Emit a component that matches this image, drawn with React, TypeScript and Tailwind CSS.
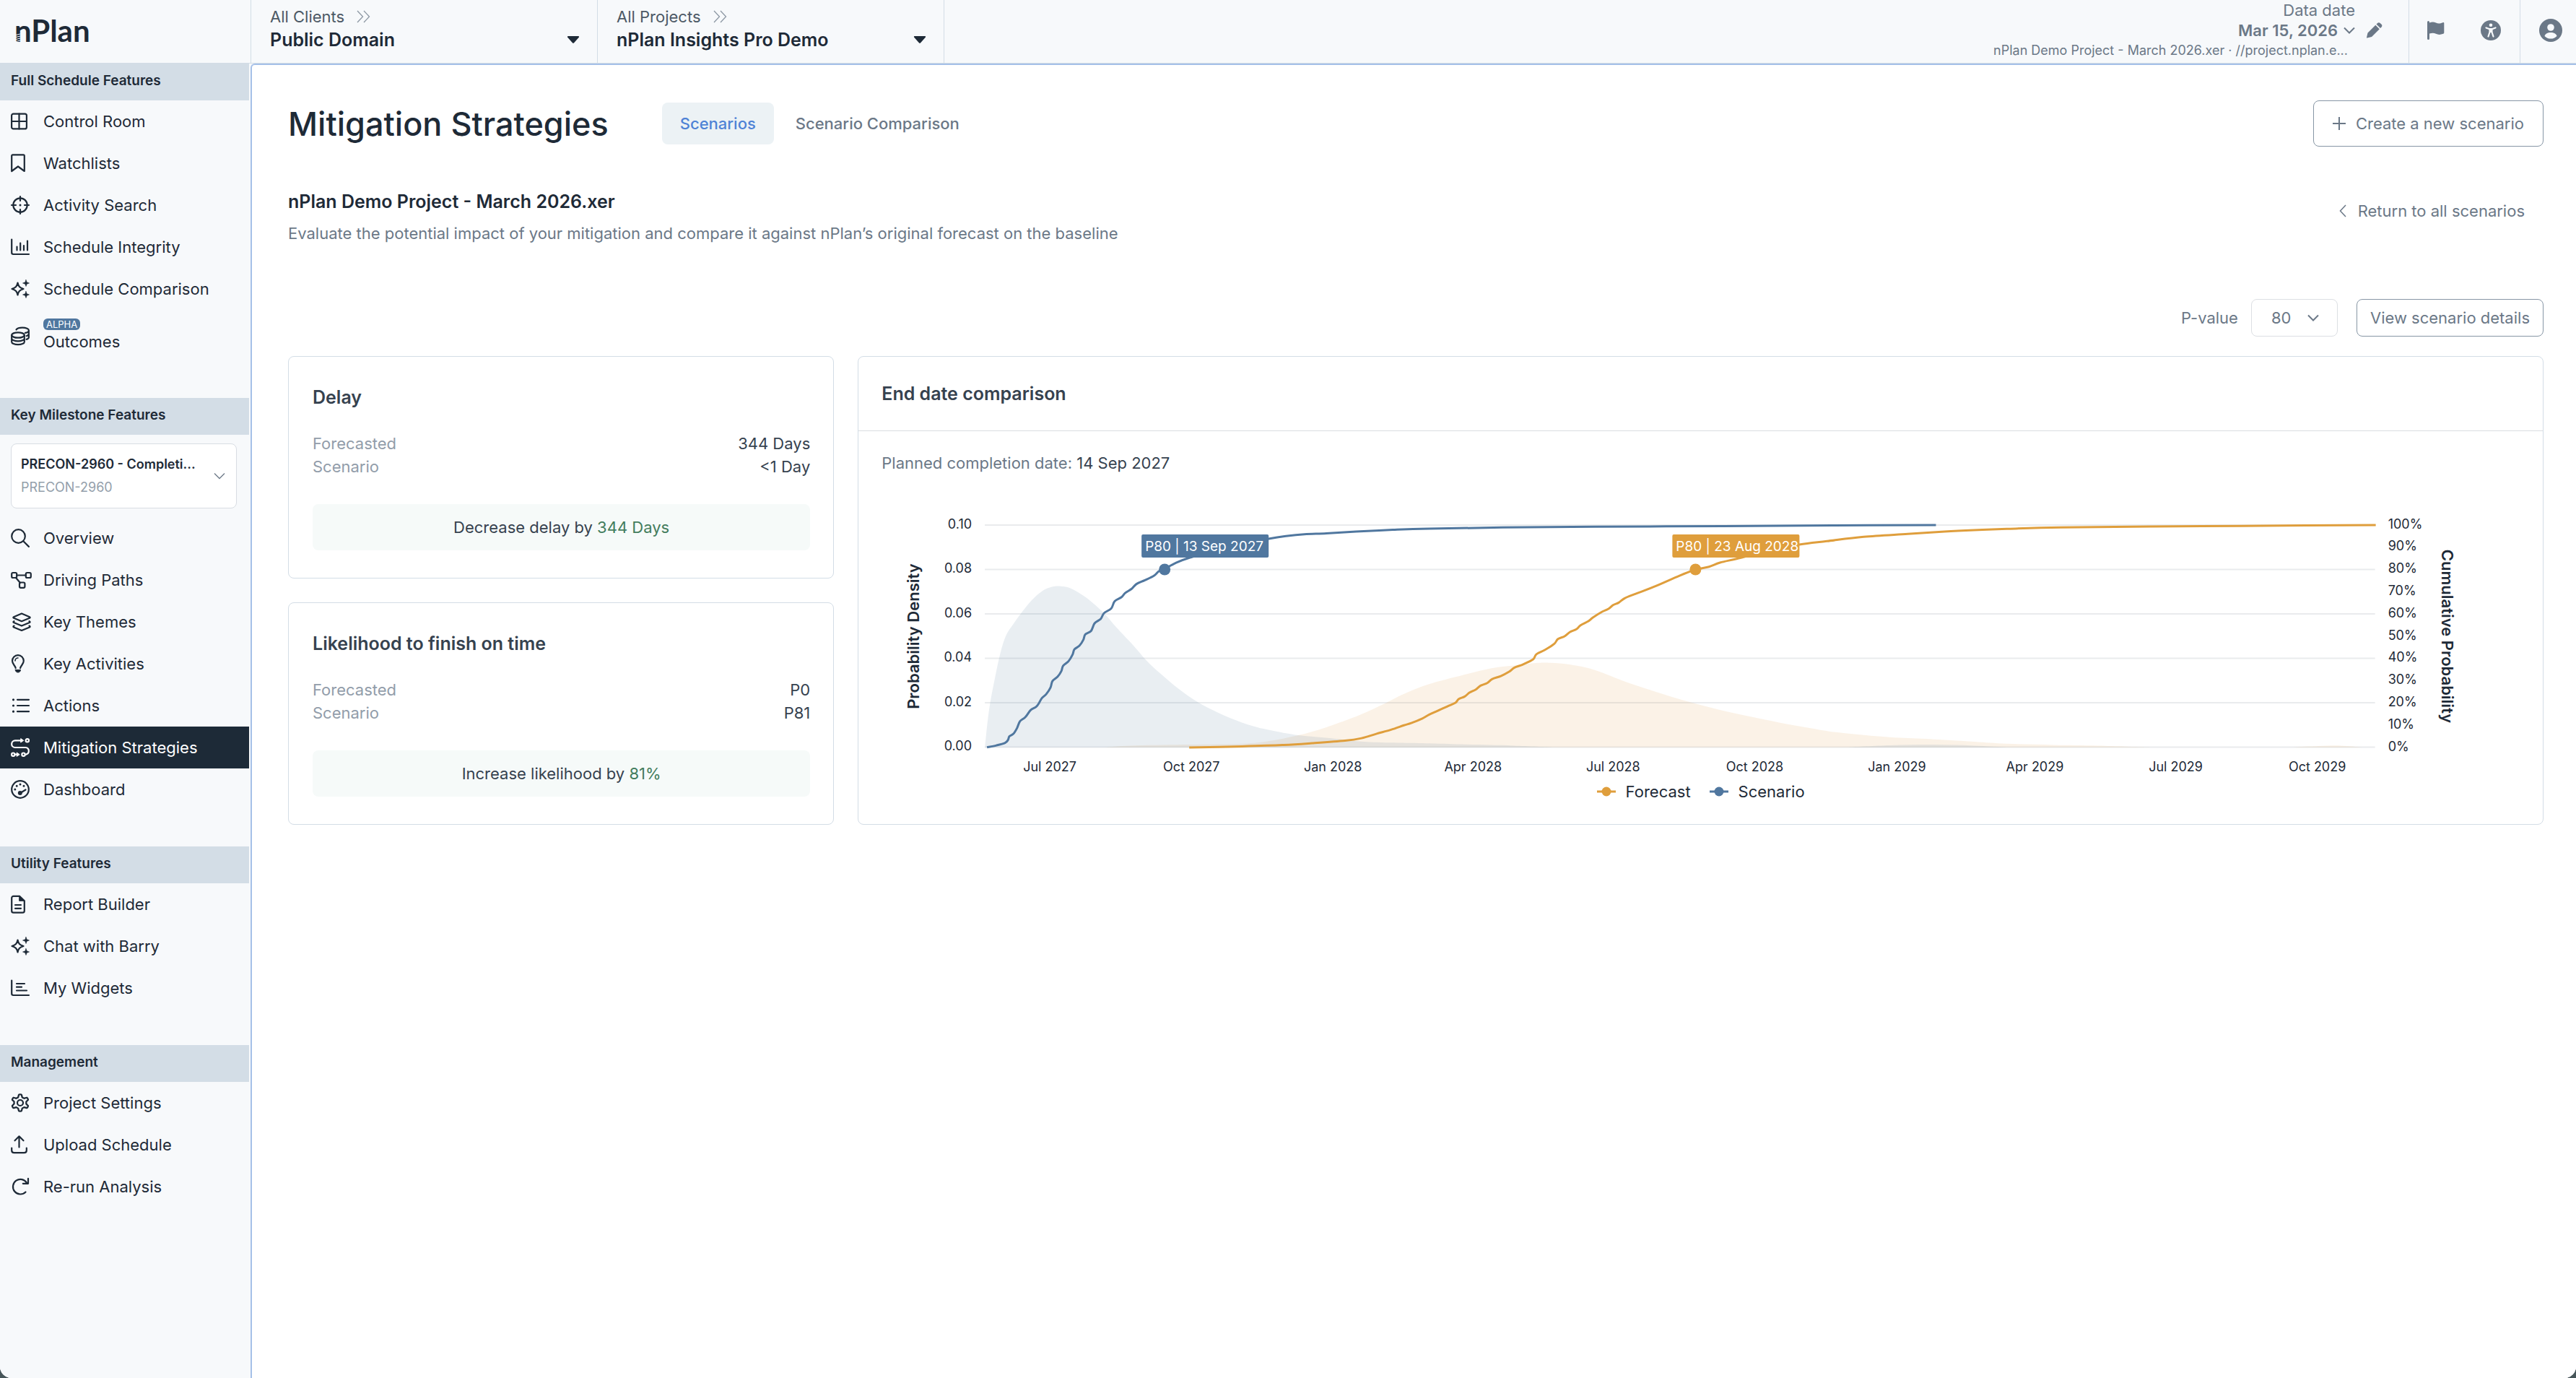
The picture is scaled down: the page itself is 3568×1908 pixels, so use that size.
import type { ReactNode } from 'react'

type IconName =
  | 'grid' | 'bookmark' | 'crosshair' | 'bars' | 'sparkles' | 'coins' | 'search' | 'flow' | 'layers'
  | 'bulb' | 'list' | 'route' | 'gauge' | 'file' | 'widgets' | 'gear' | 'upload' | 'refresh'

const sparkles = (
  <>
    <path d="M9.5 5.5c1 5 2.600 7 8 8.500c-5.400 1.500-7 3.500-8 8.500c-1-5-2.600-7-8-8.500c5.400-1.500 7-3.500 8-8.500z" />
    <path d="M21 1.500l1.200 3.300 3.300 1.200-3.300 1.200L21 10.500l-1.200-3.300L16.500 6l3.300-1.200z" fill="currentColor" strokeWidth="0.6" />
    <path d="M21 17.500l1.200 3.300 3.300 1.200-3.300 1.200L21 26.500l-1.200-3.300-3.300-1.200 3.300-1.200z" fill="currentColor" strokeWidth="0.6" />
  </>
)

const iconShapes: Record<IconName, ReactNode> = {
  grid: (
    <>
      <rect x="1.100" y="3.600" width="20.800" height="20.800" rx="2.500" />
      <path d="M11.500 3.600v20.800M1.100 14h20.800" />
    </>
  ),
  bookmark: <path d="M1.200 25V3.700c0-.8.600-1.400 1.400-1.400h14.800c.8 0 1.400.6 1.400 1.400V25L10 18.500z" />,
  crosshair: (
    <>
      <circle cx="13" cy="14" r="9.700" />
      <path d="M13 2v6M13 20v6M1 14h6M19 14h6" />
      <circle cx="13" cy="14" r="1.500" fill="currentColor" stroke="none" />
    </>
  ),
  bars: (
    <>
      <path d="M1.200 3.500v18.300c0 1.200 1 2.200 2.200 2.200H25" />
      <path d="M8.500 13.500v5M13.200 8.500v10M18 12v6.500M23 5.500v13" />
    </>
  ),
  sparkles,
  coins: (
    <>
      <ellipse cx="10" cy="13" rx="8.800" ry="3.700" />
      <path d="M1.200 13v9.500c0 2 3.900 3.700 8.800 3.700s8.800-1.700 8.800-3.700V13M1.200 17.700c0 2 3.900 3.700 8.800 3.700s8.800-1.700 8.800-3.700" />
      <path d="M7.500 5.500C8.800 3.800 12 2.700 16 2.700c5 0 8.900 1.600 8.900 3.700v9.500c0 1.200-1.300 2.300-3.200 3M24.900 6.400c0 1.700-2 3-5 3.500M24.900 11.200c0 1.300-1.300 2.300-3.200 3" />
    </>
  ),
  search: (
    <>
      <circle cx="10.500" cy="11.500" r="9.300" />
      <path d="M17.300 18.300l7.600 7.600" />
    </>
  ),
  flow: (
    <>
      <rect x="1.200" y="4" width="7" height="7" rx="1.800" />
      <rect x="20.800" y="4" width="7" height="7" rx="1.800" />
      <rect x="12" y="17.500" width="7.400" height="7.400" rx="1.800" />
      <path d="M8.200 7.500h12.600M7 11l6 7" />
    </>
  ),
  layers: (
    <>
      <path d="M15 2.500l11 4.700c.9.400.9 1.100 0 1.500L15 13.200 4 8.700c-.9-.4-.9-1.100 0-1.500z" />
      <path d="M4.500 13.200c-1.400.7-1.400 1.400-.4 1.800L15 19.600 25.900 15c1-.4 1-1.100-.4-1.800M4.500 19.600c-1.400.7-1.400 1.400-.4 1.800L15 26l10.900-4.600c1-.4 1-1.100-.4-1.800" />
    </>
  ),
  bulb: (
    <>
      <path d="M6.700 20.200C6.200 16.600 2 14.700 2 10.100a7.900 7.900 0 0 1 15.800 0c0 4.600-4.200 6.500-4.700 10.100" />
      <path d="M6 10c0-2.200 1.700-4 4-4" strokeWidth="1.600" />
      <path d="M6.300 22.500h7.200c0 2-1.500 3.500-3.600 3.500s-3.600-1.500-3.600-3.500z" fill="currentColor" strokeWidth="1" />
    </>
  ),
  list: (
    <>
      <path d="M9 5.800h16M9 14h16M9 22.200h16" />
      <path d="M3.500 5.800h.01M3.500 14h.01M3.500 22.200h.01" strokeWidth="3.200" />
    </>
  ),
  route: (
    <>
      <path d="M15 4.300H6a4.800 4.800 0 0 0 0 9.700h14.500a4.500 4.500 0 0 1 4.300 5c0 2.500-1.500 4-3.800 4.600" />
      <path d="M14 1.800l3.700 2.500L14 6.800zM8.500 21.200l3.700 2.500-3.700 2.500z" fill="currentColor" strokeWidth="1" />
      <circle cx="22.800" cy="4.300" r="2.200" />
      <circle cx="3.300" cy="23.700" r="2.200" />
      <circle cx="17.500" cy="23.700" r="2.200" />
      <path d="M5.500 23.700h4" />
    </>
  ),
  gauge: (
    <>
      <circle cx="13" cy="14" r="11.800" />
      <path d="M14 18.500l6.500-4" />
      <circle cx="12.800" cy="19" r="3" fill="currentColor" stroke="none" />
      <path d="M5.800 14h.01M8.200 9.200h.01M13 7h.01M18 9.200h.01" strokeWidth="3" />
    </>
  ),
  file: (
    <>
      <path d="M12 2.800H3.700c-1.400 0-2.500 1-2.500 2.400v18c0 1.400 1 2.400 2.500 2.400h12.600c1.400 0 2.500-1 2.500-2.400V9.300z" />
      <path d="M12 2.800l6.800 6.500H12z" fill="currentColor" strokeWidth="1" />
      <path d="M6 15h8M6 19.800h8" />
    </>
  ),
  widgets: (
    <>
      <path d="M1.200 3.500v18.300c0 1.200 1 2.200 2.200 2.200H25" />
      <path d="M8 8h11M8 12.700h7M8 17.500h14" />
    </>
  ),
  gear: (
    <>
      <path d="M10.600 5.600l.8-3c.2-.6 3-.6 3.200 0l.8 3 2.200 1.200 3-.9c.6-.2 2.100 2.300 1.600 2.700l-2.100 2.200v2.400l2.100 2.200c.5.400-1 2.900-1.600 2.700l-3-.9-2.200 1.300-.8 3c-.2.600-3 .6-3.200 0l-.8-3-2.200-1.300-3 .9c-.6.200-2.100-2.300-1.600-2.700L5.900 13v-2.400L3.800 8.600c-.5-.4 1-2.900 1.600-2.700l3 .9z" transform="translate(-2.400 -.2) scale(1.180)" strokeWidth="1.900" />
      <circle cx="13" cy="14" r="4" />
    </>
  ),
  upload: (
    <>
      <path d="M1.200 18.500v3.200c0 2 1.500 3.500 3.500 3.500h13.600c2 0 3.500-1.500 3.500-3.500v-3.200" />
      <path d="M11.500 17.500V2.500M5.500 8.300l6-6 6 6" />
    </>
  ),
  refresh: (
    <>
      <path d="M20.500 21.500a10.300 10.300 0 1 1 1.700-12.400" />
      <path d="M24 2.800v7h-7.200" />
    </>
  ),
}

function Icon({ name }: { name: IconName }) {
  return (
    <svg className="h-7 w-7 shrink-0 overflow-visible" viewBox="0 0 28 28" fill="none" stroke="currentColor" strokeWidth={2.2} strokeLinecap="round" strokeLinejoin="round" aria-hidden="true">
      {iconShapes[name]}
    </svg>
  )
}

interface NavItem {
  label: string
  icon: IconName
  badge?: string
  active?: boolean
}

const scheduleItems: NavItem[] = [
  { label: 'Control Room', icon: 'grid' },
  { label: 'Watchlists', icon: 'bookmark' },
  { label: 'Activity Search', icon: 'crosshair' },
  { label: 'Schedule Integrity', icon: 'bars' },
  { label: 'Schedule Comparison', icon: 'sparkles' },
  { label: 'Outcomes', icon: 'coins', badge: 'ALPHA' },
]

const milestoneItems: NavItem[] = [
  { label: 'Overview', icon: 'search' },
  { label: 'Driving Paths', icon: 'flow' },
  { label: 'Key Themes', icon: 'layers' },
  { label: 'Key Activities', icon: 'bulb' },
  { label: 'Actions', icon: 'list' },
  { label: 'Mitigation Strategies', icon: 'route', active: true },
  { label: 'Dashboard', icon: 'gauge' },
]

const utilityItems: NavItem[] = [
  { label: 'Report Builder', icon: 'file' },
  { label: 'Chat with Barry', icon: 'sparkles' },
  { label: 'My Widgets', icon: 'widgets' },
]

const managementItems: NavItem[] = [
  { label: 'Project Settings', icon: 'gear' },
  { label: 'Upload Schedule', icon: 'upload' },
  { label: 'Re-run Analysis', icon: 'refresh' },
]

function NavSection({ title, items, children }: { title: string; items: NavItem[]; children?: ReactNode }) {
  return (
    <section>
      <h2 className="flex h-[51px] items-center bg-[#d3dde6] px-[15px] pb-0.5 text-[19px] font-semibold">{title}</h2>
      {children}
      <ul>
        {items.map((item) => (
          <li key={item.label}>
            <a
              href="#"
              className={`flex items-center gap-[17px] px-[15px] text-[22px] ${item.badge ? 'h-[72px]' : 'h-[58px]'} ${item.active ? 'bg-[#1d2a37] text-white' : ''}`}
            >
              <Icon name={item.icon} />
              <span className="flex flex-col items-start">
                {item.badge && (
                  <span className="rounded-md bg-[#50779f] px-1 text-[13px] leading-4 text-white">{item.badge}</span>
                )}
                <span className="leading-8">{item.label}</span>
              </span>
            </a>
          </li>
        ))}
      </ul>
    </section>
  )
}

function Sidebar() {
  return (
    <nav className="flex w-[347px] shrink-0 flex-col gap-[50px] bg-[#f7f9fb] pr-0.5" aria-label="Main">
      <NavSection title="Full Schedule Features" items={scheduleItems} />
      <NavSection title="Key Milestone Features" items={milestoneItems}>
        <button type="button" aria-haspopup="listbox" className="mx-[15px] mt-3 mb-3 flex h-[90px] w-[313px] items-center justify-between rounded-lg border border-[#d8dde3] bg-white pr-[15px] pl-[13px] text-left">
          <span className="flex min-w-0 flex-col text-[18px] leading-8">
            <span className="font-semibold">PRECON-2960 - Completi...</span>
            <span className="text-[#949fab]">PRECON-2960</span>
          </span>
          <svg className="h-4 w-4" viewBox="0 0 16 16" fill="none" stroke="#6d7a88" aria-hidden="true">
            <path d="M1 4.500l7 7 7-7" strokeWidth="1.300" />
          </svg>
        </button>
      </NavSection>
      <NavSection title="Utility Features" items={utilityItems} />
      <NavSection title="Management" items={managementItems} />
    </nav>
  )
}

function ScopePicker({ id, parent, value }: { id: string; parent: string; value: string }) {
  return (
    <div className="flex w-[480px] flex-col border-r border-[#d3dde6] pt-[7px] pr-6 pl-[26px]">
      <a href="#" className="flex items-center gap-4 text-[22px] leading-8 text-[#4d5966]">
        {parent}
        <svg className="h-[18px] w-5" viewBox="0 0 20 18" fill="none" stroke="#8d98a4" strokeWidth="1.300" aria-hidden="true">
          <path d="M2 1l7.500 8L2 17M11 1l7.500 8L11 17" />
        </svg>
      </a>
      <div className="relative flex items-center">
        <select id={id} aria-label={parent} defaultValue={value} className="w-full appearance-none bg-transparent text-[25px] leading-8 font-semibold">
          <option>{value}</option>
        </select>
        <svg className="pointer-events-none absolute right-0 h-3 w-[18px]" viewBox="0 0 18 12" fill="currentColor" aria-hidden="true">
          <path d="M2 1h14c1 0 1.500 1 .8 1.700l-6.700 7.600c-.6.700-1.600.7-2.200 0L1.200 2.700C.5 2 1 1 2 1z" />
        </svg>
      </div>
    </div>
  )
}

function Header() {
  return (
    <header className="flex h-[88px] border-b border-[#d3dde6] bg-[#f7f9fb]">
      <a href="#" aria-label="nPlan home" className="relative flex w-[348px] shrink-0 items-center border-r border-[#d3dde6] pl-5 pb-1">
        <span className="font-[Lato] text-[42px] leading-none font-bold">nPlan</span>
        <svg className="absolute top-[46px] left-5 h-[14px] w-2" viewBox="0 0 8 14" stroke="#f7f9fb" strokeWidth="1" aria-hidden="true">
          <path d="M0 3l8-2M0 6l8-2M0 9l8-2M0 12l8-2" />
        </svg>
      </a>
      <ScopePicker id="client" parent="All Clients" value="Public Domain" />
      <ScopePicker id="project" parent="All Projects" value="nPlan Insights Pro Demo" />
      <div className="ml-auto flex text-[#6b7887]">
        <div className="flex items-center gap-[15px] border-r border-[#d3dde6] pr-[35px] pb-1">
          <div className="flex flex-col items-end leading-7">
            <span className="text-[22px]">Data date</span>
            <button type="button" className="flex items-center gap-2 text-[22px] font-semibold">
              Mar 15, 2026
              <svg className="h-4 w-4" viewBox="0 0 16 16" fill="none" stroke="currentColor" strokeWidth="2" aria-hidden="true">
                <path d="M1 4.500l7 7 7-7" />
              </svg>
            </button>
            <span className="pr-[10px] text-[18px]">nPlan Demo Project - March 2026.xer · //project.nplan.e...</span>
          </div>
          <button type="button" aria-label="Edit data date">
            <svg className="h-6 w-6" viewBox="0 0 24 24" fill="currentColor" aria-hidden="true">
              <path d="M2.500 15.500L13.300 4.700l5.500 5.500L8 21l-6.300 1.600c-.5.1-.8-.2-.7-.7zM14.500 3.500l1.600-1.600c1-1 2.600-1 3.600 0l1.900 1.900c1 1 1 2.600 0 3.600L20 9z" />
            </svg>
          </button>
        </div>
        <div className="flex items-center gap-[50px] border-r border-[#d3dde6] pr-[26px] pl-[25px] pb-1">
          <button type="button" aria-label="Flags">
            <svg className="h-[26px] w-6" viewBox="0 0 24 26" fill="currentColor" aria-hidden="true">
              <path d="M0 1.500a1.500 1.500 0 0 1 3 0v.9c3.500-1.300 6-1.300 9 .2 3 1.400 5.500 1.300 9.500-.4 1-.4 1.800 0 1.800 1v13c0 .8-.4 1.300-1.200 1.600-4 1.500-7 1.500-10.100 0-3-1.400-5.500-1.300-9-.2v6.900a1.500 1.500 0 0 1-3 0z" />
            </svg>
          </button>
          <button type="button" aria-label="Accessibility">
            <svg className="h-7 w-7" viewBox="0 0 28 28" aria-hidden="true">
              <circle cx="14" cy="14" r="14" fill="currentColor" />
              <circle cx="14" cy="6.800" r="2.300" fill="#f7f9fb" />
              <path d="M7.500 10.500l4 1.500h5l4-1.500M12.500 12v4.500l-2 6M15.500 12v4.500l2 6M14 12v4" fill="none" stroke="#f7f9fb" strokeWidth="2.200" strokeLinecap="round" strokeLinejoin="round" />
            </svg>
          </button>
        </div>
        <button type="button" aria-label="Account" className="pr-[19px] pb-1 pl-[26px]">
          <svg className="h-8 w-8" viewBox="0 0 32 32" aria-hidden="true">
            <circle cx="16" cy="16" r="16" fill="currentColor" />
            <circle cx="16" cy="12" r="4.800" fill="#f7f9fb" />
            <path d="M7.500 24c1-3.500 4-5 8.500-5s7.500 1.500 8.500 5a11.800 11.800 0 0 1-17 0z" fill="#f7f9fb" />
          </svg>
        </button>
      </div>
    </header>
  )
}

interface MetricCardProps {
  title: string
  forecasted: string
  scenario: string
  summary: string
  change: string
}

function MetricCard({ title, forecasted, scenario, summary, change }: MetricCardProps) {
  return (
    <article className="rounded-lg border border-[#d3dde6] pt-10 pr-8 pb-[38px] pl-[33px]">
      <h3 className="mb-8 text-[25px] leading-8 font-semibold text-[#36424f]">{title}</h3>
      <dl className="text-[22px] leading-8">
        <div className="flex justify-between">
          <dt className="text-[#929daa]">Forecasted</dt>
          <dd className="text-[#36424f]">{forecasted}</dd>
        </div>
        <div className="flex justify-between">
          <dt className="text-[#929daa]">Scenario</dt>
          <dd className="text-[#36424f]">{scenario}</dd>
        </div>
      </dl>
      <p className="mt-9 rounded-lg bg-[#f6faf9] py-4 text-center text-[22px] leading-8 text-[#36424f]">
        {summary} <span className="text-[#437d5d]">{change}</span>
      </p>
    </article>
  )
}

type Point = [number, number]

const gridLines: { y: number; density: string }[] = [
  { y: 28, density: '0.10' },
  { y: 89.5, density: '0.08' },
  { y: 151, density: '0.06' },
  { y: 212.5, density: '0.04' },
  { y: 274, density: '0.02' },
  { y: 335.5, density: '0.00' },
]

const percentTicks = [100, 90, 80, 70, 60, 50, 40, 30, 20, 10, 0]

const dateTicks: { x: number; label: string }[] = [
  { x: 265, label: 'Jul 2027' },
  { x: 461, label: 'Oct 2027' },
  { x: 657, label: 'Jan 2028' },
  { x: 851, label: 'Apr 2028' },
  { x: 1045, label: 'Jul 2028' },
  { x: 1241, label: 'Oct 2028' },
  { x: 1438, label: 'Jan 2029' },
  { x: 1629, label: 'Apr 2029' },
  { x: 1824, label: 'Jul 2029' },
  { x: 2020, label: 'Oct 2029' },
]

const scenarioLine: Point[] = [
  [178, 335.6], [191, 333], [203, 329.5], [207, 325.6], [209, 320.4], [214.5, 317], [219.6, 309], [223.7, 299.6],
  [231, 294], [238.5, 284], [246, 279.6], [250, 274.4], [254, 267.5], [260, 262], [266, 252.7], [268.6, 244],
  [275.7, 238], [281, 230], [283.4, 222.8], [291, 216.3], [296.6, 207], [299, 200], [306, 195], [311.4, 186.8],
  [314, 179.4], [322, 174.7], [327, 164], [335.4, 158], [340, 150], [350, 143.4], [354.8, 133.5], [364, 128],
  [369.6, 121.8], [378, 116.5], [385, 109.6], [396.6, 104.4], [409.4, 98], [416, 92], [423.7, 88.8], [439, 80.5],
  [459, 73], [510, 58], [568, 47], [592, 43.3], [617.5, 40.7], [648, 39.4], [689, 37], [740, 34.6], [790, 33],
  [892, 31.3], [1020, 30.3], [1198, 29.4], [1351, 28.5], [1492, 28],
]

const forecastLine: Point[] = [
  [458, 336], [531, 334.3], [587, 332.5], [628, 330], [673.7, 326.5], [696.6, 323], [717, 317], [737.4, 311.3],
  [755.3, 305.2], [765.5, 302], [780.8, 295.7], [790, 290.5], [800, 286], [815.5, 279], [826.7, 274], [831, 269],
  [839.5, 265.3], [846, 260], [854.8, 255.7], [861.4, 250.3], [870.6, 246.7], [877.8, 241], [889.5, 237],
  [901, 231], [908.4, 225.3], [920, 221], [934.4, 213.7], [938.5, 207], [950.7, 200.7], [963.5, 192.3],
  [968.6, 185.7], [977.8, 182], [985.4, 176], [994, 172.3], [1000, 166.7], [1010.4, 161.3], [1017, 156],
  [1029.8, 148], [1038.5, 144], [1045, 138.7], [1052.8, 135.3], [1061, 129.3], [1075.7, 123.3], [1101, 113.7],
  [1137, 98], [1158.9, 89.7], [1177.8, 85.7], [1193, 80], [1218.6, 74], [1256, 64], [1302.8, 55], [1341, 50.3],
  [1392, 44.3], [1453, 40.3], [1504, 37], [1545, 35], [1590, 33.3], [1665, 31.3], [1791, 30], [1942, 29], [2101, 28],
]

const scenarioDensity: Point[] = [
  [175, 335.6], [181, 283], [189, 239.7], [196.6, 205], [204.3, 181], [214.5, 165], [227, 147.8], [240, 132],
  [255, 119], [268, 113.5], [280, 112.6], [291, 114.4], [304, 121], [319, 131.3], [339.5, 149.5], [357, 169.5],
  [380, 194], [398, 214.6], [418.6, 234], [444, 255.3], [469.6, 273], [500, 288.7], [531, 301.3], [561, 310],
  [607, 318.7], [653, 323], [704, 328.2], [790, 330.2], [841, 331.7], [907, 333.3], [963, 335.6],
]

const scenarioTail: Point[] = [[1371, 335.6], [1428, 333], [1489, 332], [1545, 333.3], [1590, 335.6]]

const forecastDensity: Point[] = [
  [342, 335.6], [378, 333.4], [449, 332], [526, 330.8], [566, 327.3], [607, 319.5], [648, 307.8], [694, 291],
  [730, 274.4], [755, 262], [790, 248.3], [836, 236], [876.7, 226.3], [910, 222.3], [938, 219], [958, 218.7],
  [986, 221.3], [1019.6, 228.7], [1065, 246], [1106, 259.3], [1147, 272], [1188, 282.7], [1229, 292],
  [1275, 301.3], [1320, 309.3], [1356, 315], [1428, 321.7], [1479, 324], [1545, 328], [1590, 330.7],
  [1655, 332.3], [1716, 333.3], [1791, 335.6],
]

const forecastTail: Point[] = [[1987, 335.6], [2022, 334], [2052, 333.3], [2082, 335.6]]

// Catmull-Rom spline through the points
function smoothPath(points: Point[]) {
  let d = `M${points[0][0]} ${points[0][1]}`
  for (let i = 0; i < points.length - 1; i++) {
    const p0 = points[i - 1] ?? points[i]
    const p1 = points[i]
    const p2 = points[i + 1]
    const p3 = points[i + 2] ?? p2
    d += `C${p1[0] + (p2[0] - p0[0]) / 6} ${p1[1] + (p2[1] - p0[1]) / 6} ${p2[0] - (p3[0] - p1[0]) / 6} ${p2[1] - (p3[1] - p1[1]) / 6} ${p2[0]} ${p2[1]}`
  }
  return d
}

function EndDateChart() {
  return (
    <svg className="mt-[42px] block w-full" viewBox="0 0 2332 375" role="img" aria-label="End date comparison chart">
      <g stroke="#e9ebed" strokeWidth="2">
        {gridLines.map((line) => (
          <path key={line.y} d={`M175 ${line.y}H2100`} />
        ))}
      </g>
      <g fill="#e09b46" fillOpacity="0.13">
        <path d={smoothPath(forecastDensity)} />
        <path d={smoothPath(forecastTail)} />
      </g>
      <g fill="#567c9b" fillOpacity="0.13">
        <path d={smoothPath(scenarioDensity)} />
        <path d={smoothPath(scenarioTail)} />
      </g>
      <g fill="none" strokeWidth="3" strokeLinejoin="round">
        <path d={smoothPath(forecastLine)} stroke="#df9e3c" />
        <path d={smoothPath(scenarioLine)} stroke="#50779f" />
      </g>

      <circle cx="424" cy="89.500" r="8" fill="#50779f" />
      <circle cx="1159" cy="89.500" r="8" fill="#df9e3c" />
      <rect x="392" y="41" width="176" height="32" rx="2" fill="#50779f" />
      <rect x="1127" y="41" width="176" height="32" rx="2" fill="#df9e3c" />

      <g fontSize="19" fill="#fff" dominantBaseline="central">
        <text x="397" y="57">P80 | 13 Sep 2027</text>
        <text x="1132" y="57">P80 | 23 Aug 2028</text>
      </g>

      <g fontSize="18" fill="#1e2a37" dominantBaseline="central">
        {gridLines.map((line) => (
          <text key={line.density} x="157" y={line.y - 2} textAnchor="end">{line.density}</text>
        ))}
        {percentTicks.map((tick) => (
          <text key={tick} x="2118" y={26 + (100 - tick) * 3.08}>{tick}%</text>
        ))}
        {dateTicks.map((tick) => (
          <text key={tick.label} x={tick.x} y="362" textAnchor="middle">{tick.label}</text>
        ))}
      </g>
      <g fontSize="22" fontWeight="600" fill="#1e2a37" textAnchor="middle" dominantBaseline="central">
        <text transform="translate(76 182) rotate(-90)">Probability Density</text>
        <text transform="translate(2200 182) rotate(90)">Cumulative Probability</text>
      </g>
    </svg>
  )
}

function LegendItem({ label, color }: { label: string; color: string }) {
  return (
    <li className="flex items-center gap-3.5 text-[22px] leading-8">
      <svg className="h-4 w-[26px]" viewBox="0 0 26 16" fill={color} aria-hidden="true">
        <rect y="6.500" width="26" height="3" />
        <circle cx="13" cy="8" r="6.500" />
      </svg>
      {label}
    </li>
  )
}

export default function App() {
  return (
    <div className="min-h-screen bg-[#47565a] font-['Inter','Liberation_Sans',sans-serif] text-[#1e2a37]">
      <div className="flex min-h-screen flex-col overflow-hidden rounded-b-2xl bg-white">
        <Header />
        <div className="flex grow bg-[#f7f9fb]">
          <Sidebar />
          <main className="grow rounded-tl-md border-t-2 border-l-2 border-[#a5c0e8] bg-white pt-[49px] pr-[45px] pb-12 pl-[50px]">
            <div className="flex h-16 items-center">
              <h1 className="text-[45px] leading-none font-medium">Mitigation Strategies</h1>
              <div className="ml-[74px] flex gap-1 text-[22px] font-medium">
                <a href="#" className="rounded-lg bg-[#ecf2f5] px-[25px] py-[13px] leading-8 text-[#4f83d6]">Scenarios</a>
                <a href="#" className="px-[26px] py-[13px] leading-8 text-[#6b7887]">Scenario Comparison</a>
              </div>
              <button type="button" className="ml-auto flex h-16 items-center gap-3.5 rounded-lg border border-[#8796a5] px-[26px] text-[22px] text-[#6b7887]">
                <svg className="h-[18px] w-[18px]" viewBox="0 0 18 18" stroke="currentColor" strokeWidth="2" aria-hidden="true">
                  <path d="M9 0v18M0 9h18" />
                </svg>
                Create a new scenario
              </button>
            </div>

            <div className="mt-[54px] flex items-start justify-between">
              <div className="leading-[44px]">
                <h2 className="text-[25px] font-semibold">nPlan Demo Project - March 2026.xer</h2>
                <p className="text-[22px] text-[#6b7887]">
                  Evaluate the potential impact of your mitigation and compare it against nPlan’s original forecast on the baseline
                </p>
              </div>
              <a href="#" className="flex h-[70px] items-center gap-4 pr-[26px] text-[22px] text-[#6b7887]">
                <svg className="h-[18px] w-[10px]" viewBox="0 0 10 18" fill="none" stroke="currentColor" strokeWidth="1.500" aria-hidden="true">
                  <path d="M9 1L1.500 9 9 17" />
                </svg>
                Return to all scenarios
              </a>
            </div>

            <div className="mt-[69px] flex items-center justify-end text-[22px] text-[#6b7887]">
              <label htmlFor="p-value">P-value</label>
              <div className="relative ml-[18px] flex items-center">
                <select id="p-value" defaultValue="80" className="h-[52px] w-[120px] appearance-none rounded-lg border border-[#dcdfe3] bg-white pl-[27px]">
                  <option>50</option>
                  <option>80</option>
                  <option>90</option>
                </select>
                <svg className="pointer-events-none absolute right-[26px] h-4 w-4" viewBox="0 0 16 16" fill="none" stroke="currentColor" strokeWidth="2" aria-hidden="true">
                  <path d="M1 4.500l7 7 7-7" />
                </svg>
              </div>
              <button type="button" className="ml-[26px] h-[52px] rounded-lg border border-[#8796a5] px-[18px]">View scenario details</button>
            </div>

            <div className="mt-[27px] grid grid-cols-12 gap-[33px]">
              <div className="col-span-3 flex flex-col gap-[33px]">
                <MetricCard title="Delay" forecasted="344 Days" scenario="<1 Day" summary="Decrease delay by" change="344 Days" />
                <MetricCard title="Likelihood to finish on time" forecasted="P0" scenario="P81" summary="Increase likelihood by" change="81%" />
              </div>
              <section className="col-span-9 rounded-lg border border-[#d3dde6] pb-[29px]">
                <h3 className="border-b border-[#d9dde1] px-8 py-[35px] text-[25px] leading-8 font-semibold text-[#36424f]">End date comparison</h3>
                <p className="px-8 pt-7 text-[22px] leading-8 text-[#6b7887]">
                  Planned completion date: <span className="text-[#36424f]">14 Sep 2027</span>
                </p>
                <EndDateChart />
                <ul className="mt-1.5 flex justify-center gap-[26px]">
                  <LegendItem label="Forecast" color="#df9e3c" />
                  <LegendItem label="Scenario" color="#50779f" />
                </ul>
              </section>
            </div>
          </main>
        </div>
      </div>
    </div>
  )
}
